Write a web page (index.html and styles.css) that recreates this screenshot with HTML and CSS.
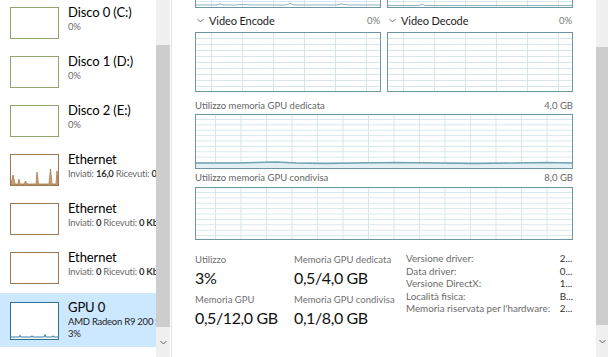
FILE: index.html
```html
<!DOCTYPE html>
<html lang="it">
<head>
    <meta charset="UTF-8">
    <meta name="viewport" content="width=device-width, initial-scale=1.0">
    <title>Gestione attività - GPU</title>
    <link rel="stylesheet" href="styles.css">
</head>
<body>
<div class="window">

    <aside class="sidebar">
        <ul class="devices">
            <li class="device disk">
                <div class="thumb"></div>
                <div class="device-text">
                    <div class="device-name">Disco 0 (C:)</div>
                    <div class="device-sub">0%</div>
                </div>
            </li>
            <li class="device disk">
                <div class="thumb"></div>
                <div class="device-text">
                    <div class="device-name">Disco 1 (D:)</div>
                    <div class="device-sub">0%</div>
                </div>
            </li>
            <li class="device disk">
                <div class="thumb"></div>
                <div class="device-text">
                    <div class="device-name">Disco 2 (E:)</div>
                    <div class="device-sub">0%</div>
                </div>
            </li>
            <li class="device net">
                <div class="thumb">
                    <svg viewBox="0 0 47 30" preserveAspectRatio="none">
                        <polygon points="0,29 2,20 4,29 7,29 8,24 9,29 13,29 14.5,26 16,29 25,29 26,17 27.5,29 38,29 39.5,14 41,29 45,29 46,16 47,29 47,30 0,30" fill="#c9a27a" stroke="#a8784a" stroke-width="0.8"/>
                    </svg>
                </div>
                <div class="device-text">
                    <div class="device-name">Ethernet</div>
                    <div class="device-sub">Inviati: <b>16,0</b> Ricevuti: <b>0</b></div>
                </div>
            </li>
            <li class="device net">
                <div class="thumb"></div>
                <div class="device-text">
                    <div class="device-name">Ethernet</div>
                    <div class="device-sub">Inviati: <b>0</b> Ricevuti: <b>0 Kbps</b></div>
                </div>
            </li>
            <li class="device net">
                <div class="thumb"></div>
                <div class="device-text">
                    <div class="device-name">Ethernet</div>
                    <div class="device-sub">Inviati: <b>0</b> Ricevuti: <b>0 Kbps</b></div>
                </div>
            </li>
            <li class="device gpu selected">
                <div class="thumb">
                    <svg viewBox="0 0 47 35" preserveAspectRatio="none">
                        <polyline points="0,33 8,33 9,31.5 10,33 20,33 21,32 22,33 33,33 34,31 35,33 41,33 42,32 43,33 47,33" fill="none" stroke="#3b7fa6" stroke-width="1"/>
                    </svg>
                </div>
                <div class="device-text">
                    <div class="device-name">GPU 0</div>
                    <div class="device-sub dark">AMD Radeon R9 200 Series</div>
                    <div class="device-sub dark">3%</div>
                </div>
            </li>
        </ul>
        <div class="scrollbar">
            <div class="scroll-thumb"></div>
            <div class="scroll-arrow">
                <svg width="7" height="5" viewBox="0 0 7 5"><path d="M0.5 1l3 3 3-3" fill="none" stroke="#606060" stroke-width="1"/></svg>
            </div>
        </div>
    </aside>

    <main class="details">
        <div class="content">

            <div class="pair stub">
                <div class="graph">
                    <svg viewBox="0 0 184 7" preserveAspectRatio="none">
                        <polyline points="0,5 20,5 24,4 28,5 40,5 44,4.5 60,5 90,5 94,3.5 98,5 140,5 146,4 152,5 184,5" fill="none" stroke="#8cb3c2" stroke-width="1"/>
                    </svg>
                </div>
                <div class="graph">
                    <svg viewBox="0 0 184 7" preserveAspectRatio="none">
                        <polyline points="0,5.5 30,5.5 34,4.5 38,5.5 184,5.5" fill="none" stroke="#8cb3c2" stroke-width="1"/>
                    </svg>
                </div>
            </div>

            <div class="pair">
                <div class="graph-head">
                    <svg class="chevron" width="7" height="5" viewBox="0 0 7 5"><path d="M0.5 1l3 3 3-3" fill="none" stroke="#777" stroke-width="1"/></svg>
                    <span>Video Encode</span>
                    <span class="pct">0%</span>
                </div>
                <div class="graph-head">
                    <svg class="chevron" width="7" height="5" viewBox="0 0 7 5"><path d="M0.5 1l3 3 3-3" fill="none" stroke="#777" stroke-width="1"/></svg>
                    <span>Video Decode</span>
                    <span class="pct">0%</span>
                </div>
                <div class="graph engine"></div>
                <div class="graph engine"></div>
            </div>

            <div class="mem-label first">
                <span>Utilizzo memoria GPU dedicata</span>
                <span>4,0 GB</span>
            </div>
            <div class="graph memory dedicated">
                <svg viewBox="0 0 376 53" preserveAspectRatio="none">
                    <polygon points="0,48 40,48 60,47.5 80,47 100,48 130,48.5 160,48 200,47.5 240,48 280,48.5 320,48 350,47.5 376,48 376,53 0,53" fill="#e4eff3"/>
                    <polyline points="0,48 40,48 60,47.5 80,47 100,48 130,48.5 160,48 200,47.5 240,48 280,48.5 320,48 350,47.5 376,48" fill="none" stroke="#6fa3b6" stroke-width="1.4"/>
                </svg>
            </div>

            <div class="mem-label second">
                <span>Utilizzo memoria GPU condivisa</span>
                <span>8,0 GB</span>
            </div>
            <div class="graph memory shared"></div>

            <div class="stats">
                <div class="stat-col first-col">
                    <div class="stat-label">Utilizzo</div>
                    <div class="stat-value">3%</div>
                    <div class="stat-label">Memoria GPU</div>
                    <div class="stat-value">0,5/12,0 GB</div>
                </div>
                <div class="stat-col second-col">
                    <div class="stat-label">Memoria GPU dedicata</div>
                    <div class="stat-value">0,5/4,0 GB</div>
                    <div class="stat-label">Memoria GPU condivisa</div>
                    <div class="stat-value">0,1/8,0 GB</div>
                </div>
                <table class="info">
                    <tr><td>Versione driver:</td><td>2...</td></tr>
                    <tr><td>Data driver:</td><td>0...</td></tr>
                    <tr><td>Versione DirectX:</td><td>1...</td></tr>
                    <tr><td>Località fisica:</td><td>B...</td></tr>
                    <tr><td>Memoria riservata per l'hardware:</td><td>2...</td></tr>
                </table>
            </div>

        </div>
        <div class="scrollbar right">
            <div class="scroll-thumb"></div>
            <div class="scroll-arrow">
                <svg width="7" height="5" viewBox="0 0 7 5"><path d="M0.5 1l3 3 3-3" fill="none" stroke="#606060" stroke-width="1"/></svg>
            </div>
        </div>
    </main>

</div>
</body>
</html>
```

FILE: styles.css
```css
body {
    margin: 0;
    font-family: 'Segoe UI', Lato, 'Noto Sans', sans-serif;
    background: #ffffff;
    color: #000000;
}

.window {
    display: flex;
    width: 610px;
    height: 357px;
    overflow: hidden;
}

/* left list */

.sidebar {
    display: flex;
    width: 170px;
    flex-shrink: 0;
}

.devices {
    list-style: none;
    margin: 0;
    padding: 0;
    width: 156px;
    overflow: hidden;
}

.device {
    display: flex;
    height: 49px;
    padding-left: 10px;
    box-sizing: border-box;
}

.device.selected {
    background-color: #cce8ff;
    height: 54px;
    margin-top: -1px;
}

.thumb {
    width: 49px;
    height: 32px;
    margin-top: 7px;
    flex-shrink: 0;
    box-sizing: border-box;
    border: 1px solid;
    background: #ffffff;
}

.thumb svg {
    display: block;
    width: 100%;
    height: 100%;
}

.disk .thumb {
    border-color: #8fa36c;
}

.net .thumb {
    border-color: #9c7a55;
}

.gpu .thumb {
    border-color: #2e6f92;
    height: 38px;
    margin-top: 9px;
}

.device-text {
    margin-left: 9px;
    padding-top: 5px;
    white-space: nowrap;
    overflow: hidden;
}

.gpu .device-text {
    padding-top: 7px;
}

.device-name {
    font-size: 13px;
    line-height: 15px;
    letter-spacing: -0.1px;
}

.device-sub {
    font-size: 9.5px;
    line-height: 13px;
    letter-spacing: -0.25px;
    color: #6b6b6b;
}

.device-sub b {
    font-weight: 700;
    color: #333333;
}

.device-sub.dark {
    color: #222222;
    line-height: 11px;
    margin-top: 1px;
}

/* scrollbars */

.scrollbar {
    display: flex;
    flex-direction: column;
    width: 14px;
    flex-shrink: 0;
    background-color: #f0f0f0;
}

.scroll-thumb {
    margin-top: 45px;
    height: 282px;
    background-color: #cdcdcd;
}

.scroll-arrow {
    flex: 1;
    display: flex;
    align-items: center;
    justify-content: center;
}

.scrollbar.right {
    width: 12px;
    margin-right: 2px;
}

.scrollbar.right .scroll-thumb {
    margin-top: 47px;
    height: 278px;
}

/* right pane */

.details {
    flex: 1;
    min-width: 0;
    display: flex;
    margin-left: 1px;
    border-left: 1px solid #e2e2e2;
}

.content {
    flex: 1;
    min-width: 0;
    padding: 0 23px;
}

.graph {
    box-sizing: border-box;
    border: 1px solid #6d97a4;
    background-color: #ffffff;
    background-image:
        linear-gradient(to right, #d6e6ec 1px, transparent 1px),
        linear-gradient(to bottom, #d6e6ec 1px, transparent 1px);
    background-size: 31px 100%, 100% 6px;
    background-position: 15px 0, 0 5px;
}

.graph svg {
    display: block;
    width: 100%;
    height: 100%;
}

.pair {
    display: grid;
    grid-template-columns: 1fr 1fr;
    column-gap: 6px;
}

.stub .graph {
    height: 8px;
    border-top: none;
    background-position: 15px 0, 0 1px;
}

.graph-head {
    display: flex;
    align-items: center;
    height: 24px;
    font-size: 11px;
    letter-spacing: -0.1px;
    color: #1e1e1e;
}

.chevron {
    margin: 1px 5px 0 2px;
}

.graph-head .pct {
    margin-left: auto;
    font-size: 9.5px;
    color: #777777;
    margin-right: 1px;
}

.graph.engine {
    height: 60px;
}

.mem-label {
    display: flex;
    justify-content: space-between;
    align-items: flex-end;
    font-size: 9.5px;
    line-height: 12px;
    color: #666666;
    box-sizing: border-box;
}

.mem-label.first {
    height: 22px;
    padding-bottom: 2px;
}

.mem-label.second {
    height: 18px;
    padding-bottom: 3px;
}

.graph.memory {
    background-size: 25.5px 100%, 100% 5.4px;
    background-position: 19px 0, 0 4px;
}

.graph.dedicated {
    height: 55px;
}

.graph.shared {
    height: 53px;
}

/* numbers under the graphs */

.stats {
    display: flex;
    align-items: flex-start;
    padding-top: 13px;
}

.stat-col {
    white-space: nowrap;
    flex-shrink: 0;
}

.stat-col.first-col {
    width: 99px;
}

.stat-col.second-col {
    width: 112px;
}

.stat-label {
    font-size: 9.5px;
    line-height: 14px;
    color: #707070;
}

.stat-value {
    font-size: 16px;
    line-height: 22px;
    letter-spacing: -0.4px;
    color: #111111;
    margin-bottom: 4px;
}

.info {
    flex: 1;
    border-collapse: collapse;
    font-size: 9.8px;
    margin-top: -1px;
}

.info td {
    padding: 0;
    height: 12.5px;
    line-height: 12.5px;
    color: #6b6b6b;
    white-space: nowrap;
}

.info td:last-child {
    color: #333333;
    width: 13px;
}
```
